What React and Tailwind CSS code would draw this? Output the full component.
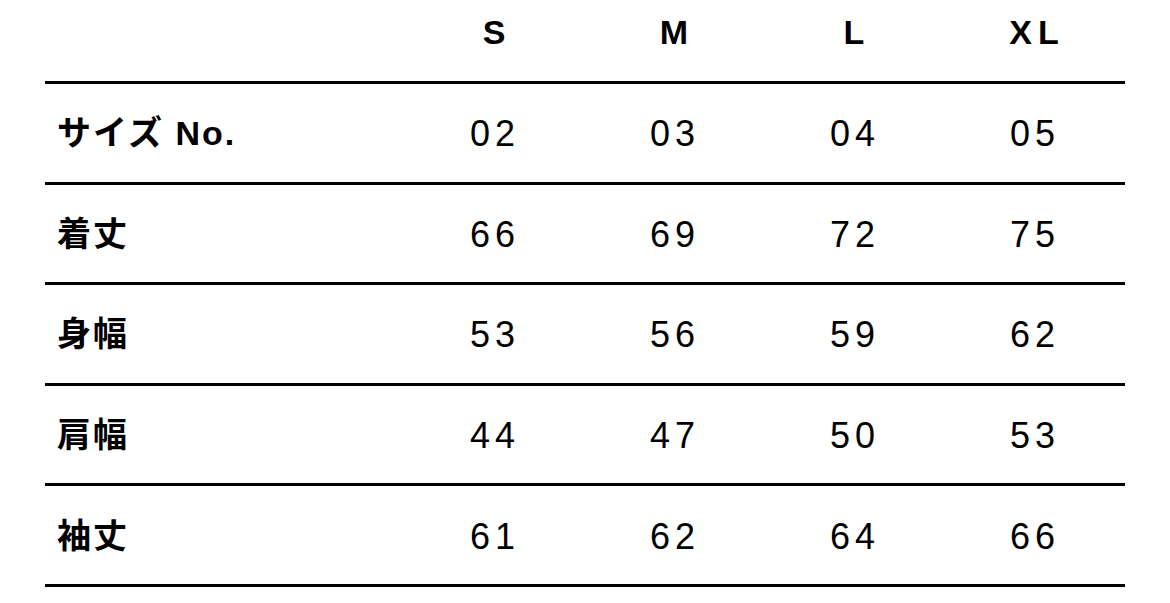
const sizes = ['S', 'M', 'L', 'XL'];

const rows = [
  { label: 'サイズ No.', values: ['02', '03', '04', '05'] },
  { label: '着丈', values: ['66', '69', '72', '75'] },
  { label: '身幅', values: ['53', '56', '59', '62'] },
  { label: '肩幅', values: ['44', '47', '50', '53'] },
  { label: '袖丈', values: ['61', '62', '64', '66'] },
];

export default function App() {
  return (
    <div
      className="min-h-screen bg-white text-black"
      style={{ fontFamily: '"Liberation Sans", "Noto Sans CJK JP", sans-serif' }}
    >
      <div className="ml-[45px] w-[1080px]">
        <div className="grid h-[84px] grid-cols-[360px_180px_180px_180px_180px] items-center pb-[16px] border-b-[3px] border-black">
          <div />
          {sizes.map((s) => (
            <div key={s} className="pl-[4px] text-center text-[34px] font-bold tracking-[6px]">
              {s}
            </div>
          ))}
        </div>
        {rows.map((row) => (
          <div
            key={row.label}
            className="grid h-[100.6px] grid-cols-[360px_180px_180px_180px_180px] items-center border-b-[3px] border-black"
          >
            <div className="pl-[12px] pt-[2px] text-[34px] font-bold tracking-[2px]">{row.label}</div>
            {row.values.map((v, i) => (
              <div key={i} className="pt-[3px] text-center text-[36px] tracking-[5px]">
                {v}
              </div>
            ))}
          </div>
        ))}
      </div>
    </div>
  );
}
